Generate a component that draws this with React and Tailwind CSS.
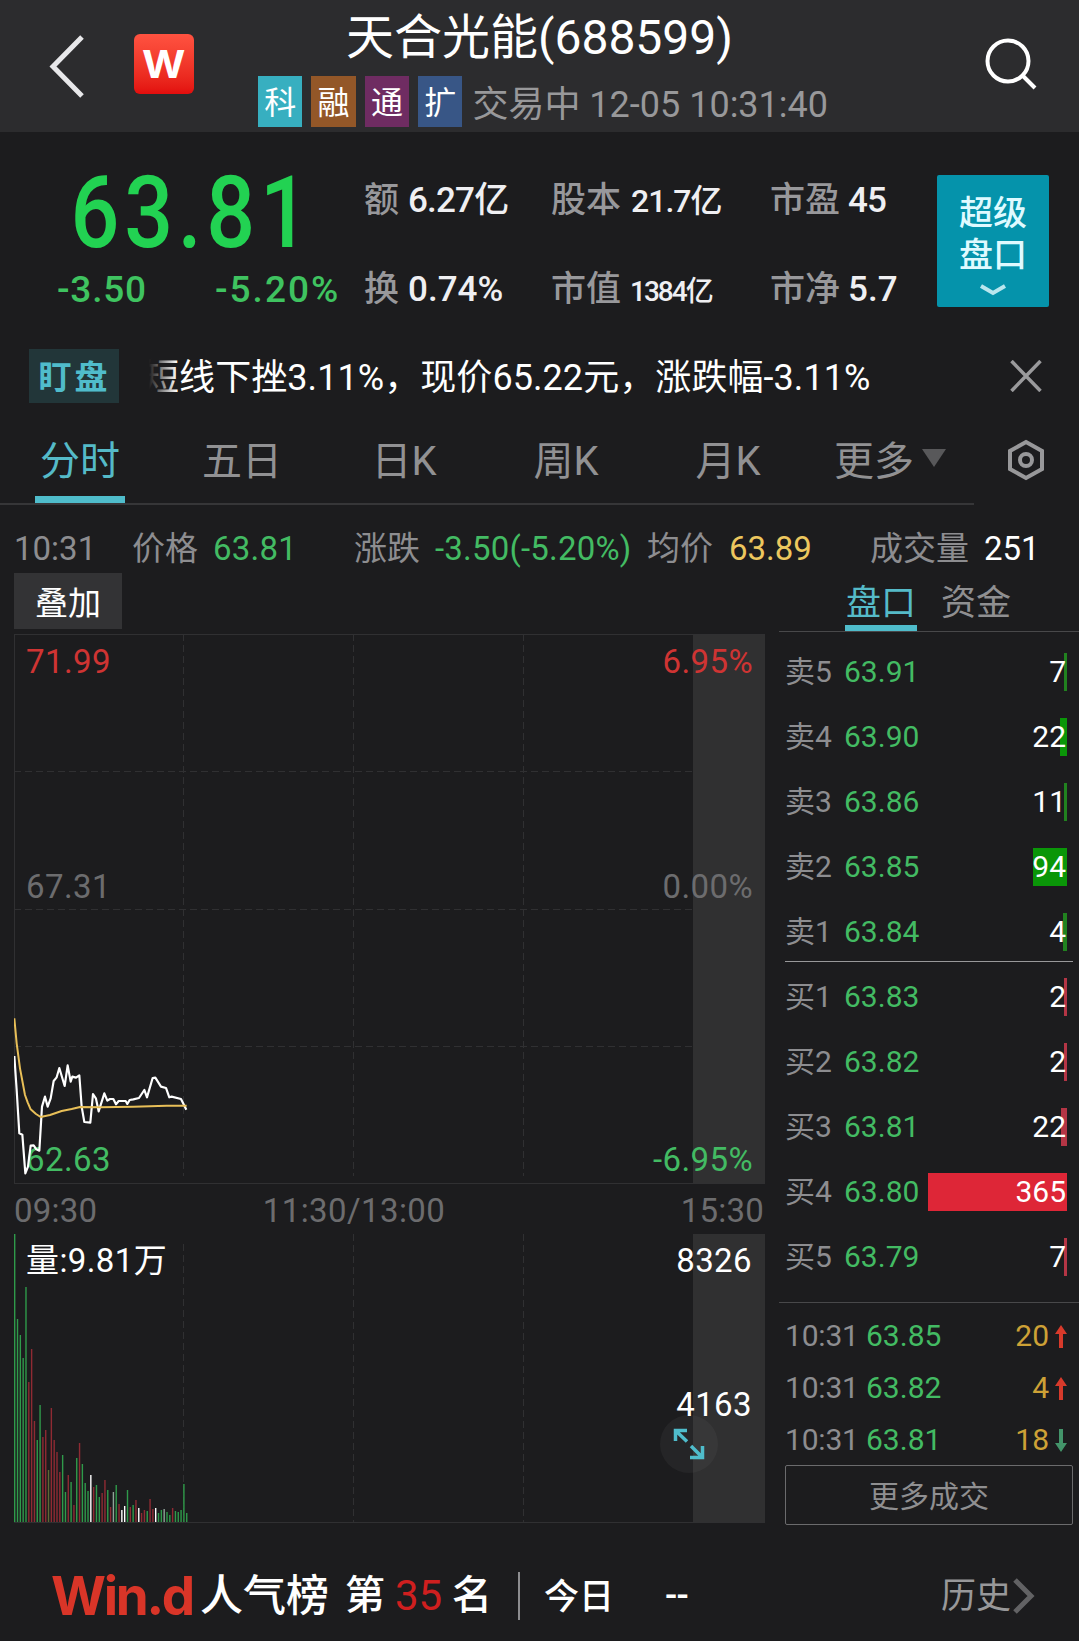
import React, { useState } from "react";

const tags = [
  { text: "科", className: "bg-[#37afc0]" },
  { text: "融", className: "bg-[#935728]" },
  { text: "通", className: "bg-[#6f2c62]" },
  { text: "扩", className: "bg-[#385686]" },
];

const tabs = ["分时", "五日", "日K", "周K", "月K", "更多"];

const asks = [
  { label: "卖5", price: "63.91", volume: 7, width: 3 },
  { label: "卖4", price: "63.90", volume: 22, width: 7 },
  { label: "卖3", price: "63.86", volume: 11, width: 3 },
  { label: "卖2", price: "63.85", volume: 94, width: 34 },
  { label: "卖1", price: "63.84", volume: 4, width: 4 },
];

const bids = [
  { label: "买1", price: "63.83", volume: 2, width: 3 },
  { label: "买2", price: "63.82", volume: 2, width: 3 },
  { label: "买3", price: "63.81", volume: 22, width: 6 },
  { label: "买4", price: "63.80", volume: 365, width: 139 },
  { label: "买5", price: "63.79", volume: 7, width: 3 },
];

const trades = [
  { time: "10:31", price: "63.85", volume: 20, up: true },
  { time: "10:31", price: "63.82", volume: 4, up: true },
  { time: "10:31", price: "63.81", volume: 18, up: false },
];

// one entry per minute: height and colour (g = down, r = up, w = flat)
const volumes = [
  [288, "g"], [203, "g"], [187, "g"], [164, "g"], [235, "g"], [140, "r"], [173, "r"], [101, "r"],
  [82, "g"], [117, "g"], [85, "r"], [92, "r"], [52, "o"], [114, "r"], [82, "r"], [70, "r"],
  [50, "r"], [67, "g"], [30, "g"], [47, "r"], [40, "g"], [17, "r"], [64, "g"], [79, "r"],
  [58, "g"], [39, "g"], [31, "g"], [47, "w"], [35, "r"], [37, "g"], [25, "g"], [29, "r"],
  [42, "r"], [32, "g"], [15, "r"], [30, "s"], [37, "g"], [18, "r"], [12, "w"], [16, "w"],
  [32, "g"], [15, "r"], [17, "g"], [22, "r"], [14, "w"], [9, "r"], [12, "r"], [11, "g"],
  [23, "r"], [13, "r"], [14, "w"], [9, "g"], [12, "g"], [13, "s"], [10, "g"], [7, "g"],
  [14, "r"], [11, "g"], [10, "g"], [12, "g"], [38, "g"], [9, "g"],
];

const volumeColors = { g: "#2f9a4a", r: "#8f2a33", w: "#ffffff", o: "#5e6a35", s: "#8fa398" };

const pricePoints =
  "43,228 50,330 58,460 67,464 76,580 84,560 92,497 101,496 109,508 118,512 126,380 135,350 143,380 152,355 161,303 170,292 178,264 194,318 203,256 212,305 217,290 228,293 238,286 245,380 253,426 271,428 279,342 288,356 296,394 313,340 322,362 330,357 340,357 348,373 356,363 377,363 382,372 389,360 400,358 417,354 433,330 441,352 458,294 466,293 483,320 498,324 508,352 515,350 543,357 551,373 559,389";

const averagePoints =
  "43,115 50,190 60,265 75,345 83,367 92,388 108,402 122,411 150,405 185,393 215,387 240,381 300,382 400,380 500,377 560,377";

const Stat = ({ label, value, valueClass }) => (
  <div className="flex h-[89px] items-center">
    <span className="pt-[3px] text-[35px] font-medium text-[#98989b]">{label}</span>
    <span className={`font-medium text-[#efeff2] ${valueClass}`}>{value}</span>
  </div>
);

const OrderRow = ({ row, barClass }) => (
  <div className="flex h-[65px] items-center pl-[6px] pr-3 text-[30px]">
    <span className="w-[59px] text-[#8d8d90]">{row.label}</span>
    <span className="text-[#43bb63]">{row.price}</span>
    <div className="relative ml-auto flex h-[38px] w-[139px] items-center justify-end pr-px">
      <div className={`absolute inset-y-0 right-0 ${barClass}`} style={{ width: row.width }} />
      <span className="relative text-white">{row.volume}</span>
    </div>
  </div>
);

const Header = () => (
  <header className="flex h-[132px] bg-[#2c2c2e]">
    <div className="flex w-[258px] items-start pl-[49px] pt-[34px]">
      <svg width="36" height="65" viewBox="0 0 36 65" fill="none" stroke="#e8e8ea" strokeWidth="5">
        <path d="M33 3 L4 32.500 L33 62" />
      </svg>
      <div className="ml-[49px] flex h-[60px] w-[60px] items-center justify-center rounded-md bg-linear-to-b from-[#ff5240] to-[#e30d0d]">
        <span className="scale-x-110 font-[Inter,sans-serif] text-[38px] font-bold text-white">W</span>
      </div>
    </div>
    <div className="w-[570px]">
      <h1 className="mt-3 w-[563px] pl-[88px] text-[48px] leading-[51px] whitespace-nowrap text-white">天合光能(688599)</h1>
      <div className="mt-[13px] flex h-[51px] items-center">
        {tags.map((tag) => (
          <span
            key={tag.text}
            className={`mr-[9px] flex h-[51px] w-[45px] items-center justify-center pt-[2px] text-[32px] text-white ${tag.className}`}
          >
            {tag.text}
          </span>
        ))}
        <span className="ml-px pt-[6px] text-[36px] whitespace-nowrap text-[#98989a]">交易中 12-05 10:31:40</span>
      </div>
    </div>
    <svg className="mt-[36px] ml-[156px]" width="56" height="60" viewBox="0 0 56 60" fill="none" stroke="#fff" strokeWidth="4">
      <circle cx="24" cy="25" r="20.500" />
      <path d="M38 39 L51 52" />
    </svg>
  </header>
);

const Quote = () => (
  <section className="flex h-[201px] pt-[22px]">
    <div className="w-[364px] text-[#3fc360]">
      <div className="mt-[8px] h-[101px] w-[330px] origin-left scale-x-[0.86] pl-[82px] text-[100px] leading-[101px] font-medium tracking-[5.500px] text-[#22d252]">
        63.81
      </div>
      <div className="flex h-[52px] items-center pl-[57px] text-[37px] font-medium">
        <span className="w-[158px] tracking-[0.8px]">-3.50</span>
        <span className="tracking-[2px]">-5.20%</span>
      </div>
    </div>
    <div className="w-[187px]">
      <Stat label="额" value="6.27亿" valueClass="ml-[9px] pt-[3px] text-[35px] tracking-[-0.8px]" />
      <Stat label="换" value="0.74%" valueClass="ml-[9px] pt-[3px] text-[35px]" />
    </div>
    <div className="w-[219px]">
      <Stat label="股本" value="21.7亿" valueClass="ml-[10px] pt-[5px] text-[32px] tracking-[-1px]" />
      <Stat label="市值" value="1384亿" valueClass="ml-[9px] pt-[8px] text-[28px] tracking-[-2px]" />
    </div>
    <div className="w-[167px]">
      <Stat label="市盈" value="45" valueClass="ml-[8px] pt-[3px] text-[35px] tracking-[-1px]" />
      <Stat label="市净" value="5.7" valueClass="ml-[8px] pt-[3px] text-[35px]" />
    </div>
    <button className="mt-[21px] flex h-[132px] w-[112px] flex-col items-center rounded-xs bg-[#0593ab] pt-[17px] text-[34px] leading-[42px] font-medium text-[#dffaff]">
      <span>超级</span>
      <span>盘口</span>
      <svg className="mt-[7px]" width="28" height="14" viewBox="0 0 28 14" fill="none" stroke="#b9e6ee" strokeWidth="4">
        <path d="M2 3 L14 10 L26 3" />
      </svg>
    </button>
  </section>
);

const Alert = () => (
  <section className="flex h-[85px] items-center pl-[29px]">
    <span className="flex h-[54px] w-[90px] items-center justify-center bg-[#223639] pt-[3px] pl-px text-[33px] font-bold tracking-[3px] text-[#50bccb]">
      盯盘
    </span>
    <div className="relative ml-[30px] h-[58px] w-[750px] overflow-hidden">
      <div className="-ml-[6px] pt-[4px] text-[36px] leading-[54px] tracking-[0.07px] whitespace-nowrap text-white">
        短线下挫3.11%，现价65.22元，涨跌幅-3.11%
      </div>
      <div className="absolute inset-y-0 left-0 w-[28px] bg-linear-to-r from-[#1c1c1e] to-transparent" />
    </div>
    <svg className="ml-[111px]" width="32" height="32" viewBox="0 0 32 32" stroke="#9a9a9c" strokeWidth="3.500">
      <path d="M1.500 1 L30.500 31 M30.500 1 L1.500 31" />
    </svg>
  </section>
);

const Tabs = ({ active, onChange }) => (
  <nav className="flex h-[87px]">
    <div className="flex w-[974px] border-b-2 border-[#363638]">
      {tabs.map((tab) => (
        <button
          key={tab}
          onClick={() => onChange(tab)}
          className={`flex w-[162px] flex-col items-center pr-[2px] text-[40px] ${active === tab ? "text-[#55bac8]" : "text-[#919193]"}`}
        >
          <span className="flex h-[78px] items-center pt-[9px]">
            {tab}
            {tab === "更多" && (
              <svg className="mb-[8px] ml-2" width="24" height="18" viewBox="0 0 24 18" fill="#58585a">
                <path d="M0 0 H24 L12 18 Z" />
              </svg>
            )}
          </span>
          {active === tab && <span className="h-[7px] w-[90px] bg-[#4fbccb]" />}
        </button>
      ))}
    </div>
    <svg className="mt-[20px] ml-[32px]" width="40" height="44" viewBox="0 0 40 44" fill="none" stroke="#98989a" strokeWidth="4">
      <path d="M20 4 L36 13 V31 L20 40 L4 31 V13 Z" />
      <circle cx="20" cy="22" r="6" />
    </svg>
  </nav>
);

const InfoRow = () => (
  <div className="flex h-[68px] items-center pt-[19px] pl-[14px] text-[33px] leading-[49px] whitespace-nowrap text-[#8d8d90]">
    <span className="w-[118px]">10:31</span>
    <span className="w-[81px]">价格</span>
    <span className="w-[141px] tracking-[0.2px] text-[#43bb63]">63.81</span>
    <span className="w-[81px]">涨跌</span>
    <span className="w-[212px] tracking-[0.200px] text-[#43bb63]">-3.50(-5.20%)</span>
    <span className="w-[82px]">均价</span>
    <span className="w-[141px] text-[#edc75e]">63.89</span>
    <span className="w-[114px]">成交量</span>
    <span className="text-white">251</span>
  </div>
);

const PriceChart = () => (
  <div className="relative h-[550px] w-[751px]">
    <svg className="absolute inset-0" width="751" height="550" viewBox="0 0 751 550" fill="none">
      <rect x="679" y="0" width="72" height="550" fill="#303031" />
      <path d="M0.500 0 V550 M0 0.500 H751 M0 549.500 H751" stroke="#303032" />
      <path
        d="M169.500 0 V542 M339.500 0 V542 M509.500 0 V542 M0 137.500 H679 M0 275.500 H679 M0 412.500 H679"
        stroke="#303032"
        strokeDasharray="7 4"
      />
    </svg>
    <div className="relative flex h-full flex-col px-[12px] pt-[3px] text-[33px] leading-[49px] tracking-[0.4px]">
      <div className="flex justify-between text-[#cf3433]">
        <span>71.99</span>
        <span>6.95%</span>
      </div>
      <div className="mt-[176px] flex justify-between text-[#6c6c6e]">
        <span>67.31</span>
        <span>0.00%</span>
      </div>
      <div className="mt-auto flex justify-between text-[#43bb63]">
        <span>62.63</span>
        <span>-6.95%</span>
      </div>
    </div>
    <svg className="absolute inset-0" width="751" height="550" viewBox="0 0 751 550" fill="none">
      <g transform="translate(-14 346) scale(0.3333)" strokeLinejoin="round">
        <polyline points={pricePoints} stroke="#fff" strokeWidth="6.500" />
        <polyline points={averagePoints} stroke="#e8bf58" strokeWidth="6" />
      </g>
    </svg>
  </div>
);

const VolumeChart = () => (
  <div className="relative h-[289px] w-[751px]">
    <svg className="absolute inset-0" width="751" height="289" viewBox="0 0 751 289" fill="none">
      <rect x="679" y="0" width="72" height="289" fill="#303031" />
      <path d="M0 288.500 H751" stroke="#303032" />
      <path d="M169.500 10 V288 M339.500 0 V288 M509.500 0 V288" stroke="#303032" strokeDasharray="7 4" />
      {volumes.map(([height, color], i) => (
        <rect key={i} x={i * 2.82} y={288 - height} width="1.400" height={height} fill={volumeColors[color]} />
      ))}
    </svg>
    <div className="absolute top-[181px] left-[646px] flex h-[58px] w-[58px] items-center justify-center rounded-full bg-[#80808018]">
      <svg width="32" height="32" viewBox="0 0 32 32" fill="none" stroke="#4fbccb" strokeWidth="3.500">
        <path d="M2.500 13 V2.500 H14 M3 3 L14 13.500 M18 18 L29 29 M29.500 18 V29.500 H17" />
      </svg>
    </div>
    <div className="relative flex justify-between px-[12px] pt-[2px] text-[33px] leading-[49px] text-white">
      <span className="tracking-[0.400px]">量:9.81万</span>
      <div className="flex flex-col gap-[95px] pr-px text-right tracking-[0.400px]">
        <span>8326</span>
        <span>4163</span>
      </div>
    </div>
  </div>
);

const OrderBook = () => (
  <aside className="w-[300px]">
    <div className="flex h-[59px] border-b border-[#48484a] pl-[66px] text-[35px]">
      <div className="flex w-[72px] flex-col items-center text-[#55bac8]">
        <span className="h-[52px] pt-[4px] leading-[54px]">盘口</span>
        <span className="h-[6px] w-full bg-[#4fbccb]" />
      </div>
      <span className="ml-[24px] pt-[4px] leading-[54px] text-[#8f8f91]">资金</span>
    </div>
    <div className="pt-[7px]">
      {asks.map((row) => (
        <OrderRow key={row.label} row={row} barClass={row.volume > 20 ? "bg-[#0a9608]" : "bg-[#21821f]"} />
      ))}
      <div className="-mt-[3px] mr-[6px] mb-[2px] ml-[6px] h-px bg-[#98989a]" />
      {bids.map((row) => (
        <OrderRow key={row.label} row={row} barClass={row.volume > 100 ? "bg-[#de2637]" : "bg-[#b43545]"} />
      ))}
    </div>
    <div className="mt-[13px] border-t border-[#48484a] pt-[7px]">
      {trades.map((trade) => (
        <div key={trade.price} className="flex h-[52px] items-center pr-[12px] pl-[6px] text-[30px]">
          <span className="w-[81px] tracking-[-0.2px] text-[#8d8d90]">{trade.time}</span>
          <span className="text-[#43bb63]">{trade.price}</span>
          <span className="mr-[6px] ml-auto text-[#cda136]">{trade.volume}</span>
          <svg
            className={trade.up ? "" : "rotate-180"}
            width="12"
            height="23"
            viewBox="0 0 12 23"
            fill={trade.up ? "#d73a2b" : "#43946a"}
          >
            <path d="M6 0 L12 9 H8 V23 H4 V9 H0 Z" />
          </svg>
        </div>
      ))}
    </div>
    <button className="-mt-px ml-[6px] flex h-[60px] w-[288px] items-center justify-center rounded-xs border border-[#6b6b6d] pt-[3px] text-[30px] text-[#8f8f91]">
      更多成交
    </button>
  </aside>
);

const Footer = () => (
  <footer className="mt-[25px] flex h-[90px] items-center whitespace-nowrap text-white">
    <span className="ml-[51px] w-[149px] font-[Inter,sans-serif] text-[53px] font-bold tracking-[-2.300px] text-[#d93528]">
      Win.d
    </span>
    <span className="w-[145px] text-[43px] font-medium">人气榜</span>
    <span className="w-[50px] text-[40px] font-medium">第</span>
    <span className="w-[57px] text-[42px] text-[#cf1f1f]">35</span>
    <span className="w-[66px] text-[40px] font-medium">名</span>
    <span className="h-[48px] w-[2px] bg-[#8d8d90]" />
    <span className="ml-[24px] w-[121px] pt-[2px] text-[35px] font-medium">今日</span>
    <span className="text-[36px] font-medium tracking-[-0.8px]">--</span>
    <span className="ml-auto text-[35px] text-[#98989a]">历史</span>
    <svg className="mr-[44px] ml-[2px]" width="22" height="36" viewBox="0 0 22 36" fill="none" stroke="#626264" strokeWidth="5">
      <path d="M2 2 L18 18 L2 34" />
    </svg>
  </footer>
);

const App = () => {
  const [activeTab, setActiveTab] = useState("分时");

  return (
    <div
      lang="zh-CN"
      className="h-[1641px] w-[1079px] overflow-hidden bg-[#1c1c1e] font-['Roboto','Noto_Sans_CJK_SC',sans-serif] leading-none"
    >
      <Header />
      <Quote />
      <Alert />
      <Tabs active={activeTab} onChange={setActiveTab} />
      <InfoRow />
      <main className="flex h-[953px]">
        <div className="w-[779px] pl-[14px]">
          <button className="flex h-[56px] w-[108px] items-center justify-center bg-[#333335] pt-[5px] text-[33px] text-white">
            叠加
          </button>
          <div className="mt-[5px]">
            <PriceChart />
            <div className="flex h-[50px] w-[750px] items-center justify-between pt-[2px] text-[33px] tracking-[0.200px] text-[#6c6c6e]">
              <span>09:30</span>
              <span className="mr-[70px] tracking-[0.400px]">11:30/13:00</span>
              <span>15:30</span>
            </div>
            <VolumeChart />
          </div>
        </div>
        <OrderBook />
      </main>
      <Footer />
    </div>
  );
};

export default App;
